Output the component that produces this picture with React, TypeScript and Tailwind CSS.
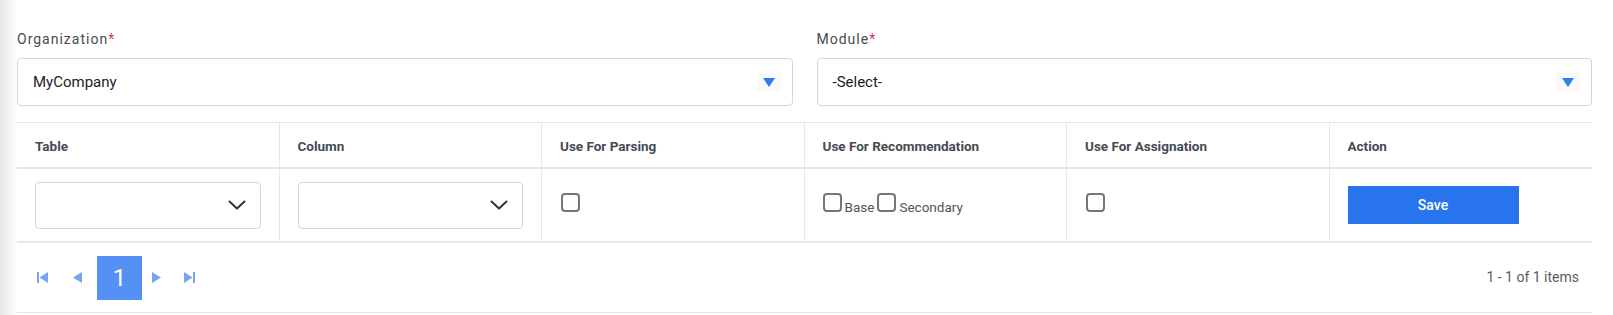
import type { ReactNode } from 'react'

const font = { fontFamily: 'Roboto, "Liberation Sans", Arial, sans-serif' }

function BlueCaret() {
  return (
    <span className="mr-[11px] flex h-[18px] w-[24px] items-center justify-center bg-[#f8f9fa]">
      <svg width="12" height="9" viewBox="0 0 12 9">
        <path d="M0 0h12L6 9z" fill="#2f7cf2" />
      </svg>
    </span>
  )
}

function Field({ label, value }: { label: string; value: string }) {
  return (
    <div>
      <div className="mb-[9px] h-[20px] text-[14px] leading-[20px] tracking-[1px] text-[#4a4a4a]">
        {label}
        <span className="text-[#e0344f]">*</span>
      </div>
      <div className="flex h-[48px] items-center justify-between rounded-[4px] border border-[#d3d6db] bg-white pl-[15px]">
        <span className="text-[15px] text-[#1d1d1d]">{value}</span>
        <BlueCaret />
      </div>
    </div>
  )
}

function Chevron() {
  return (
    <svg width="18" height="10" viewBox="0 0 18 10" fill="none">
      <path d="M1.5 1.5 9 8.5l7.5-7" stroke="#333" strokeWidth="2" strokeLinecap="round" strokeLinejoin="round" />
    </svg>
  )
}

function CellSelect() {
  return (
    <div className="flex h-[47px] w-full items-center justify-end rounded-[4px] border border-[#d3d6db] bg-white pr-[14px]">
      <Chevron />
    </div>
  )
}

function Box() {
  return <span className="inline-block h-[19px] w-[19px] rounded-[4px] border-2 border-[#767676] bg-white align-baseline" />
}

function Cell({ children, className = '' }: { children?: ReactNode; className?: string }) {
  return <div className={`flex items-center px-[18px] ${className}`}>{children}</div>
}

function Tri({ dir }: { dir: 'first' | 'prev' | 'next' | 'last' }) {
  const c = '#76a4f0'
  if (dir === 'prev' || dir === 'next') {
    return (
      <svg width="9" height="11" viewBox="0 0 9 11">
        {dir === 'prev' ? <path d="M9 0v11L0 5.5z" fill={c} /> : <path d="M0 0v11l9-5.5z" fill={c} />}
      </svg>
    )
  }
  return (
    <svg width="11" height="11" viewBox="0 0 11 11">
      {dir === 'first' ? (
        <>
          <rect x="0" y="0" width="2" height="11" fill={c} />
          <path d="M11 0v11L2.5 5.5z" fill={c} />
        </>
      ) : (
        <>
          <path d="M0 0v11l8.5-5.5z" fill={c} />
          <rect x="9" y="0" width="2" height="11" fill={c} />
        </>
      )}
    </svg>
  )
}

export default function App() {
  const headers = ['Table', 'Column', 'Use For Parsing', 'Use For Recommendation', 'Use For Assignation', 'Action']

  return (
    <div className="flex min-h-[315px] bg-white" style={font}>
      <div className="w-[17px] shrink-0 bg-gradient-to-r from-[#e6e6e6] to-white" />
      <div className="flex-1 pr-[21px]">
        <div className="grid grid-cols-2 gap-x-6 pt-[29px]">
          <Field label="Organization" value="MyCompany" />
          <Field label="Module" value="-Select-" />
        </div>

        <div className="mt-[16px]">
          {/* header */}
          <div className="grid grid-cols-6 divide-x divide-[#e4e7eb] border-t border-b-2 border-[#e4e7eb]">
            {headers.map((h) => (
              <Cell key={h} className="h-[44px] pt-[2px]">
                <span className="text-[13.5px] font-bold text-[#454b54]">{h}</span>
              </Cell>
            ))}
          </div>

          {/* row */}
          <div className="grid grid-cols-6 divide-x divide-[#e4e7eb] border-b-2 border-[#e4e7eb]">
            <Cell className="h-[72px]">
              <CellSelect />
            </Cell>
            <Cell className="h-[72px]">
              <CellSelect />
            </Cell>
            <Cell className="h-[72px] pl-[19px]">
              <div className="text-[13.5px] leading-[20px]">
                <Box />
              </div>
            </Cell>
            <Cell className="h-[72px]">
              <div className="text-[13.5px] leading-[20px] text-[#555]">
                <Box />
                <span className="ml-[3px] mr-[3px]">Base</span>
                <Box />
                <span className="ml-[3px]">Secondary</span>
              </div>
            </Cell>
            <Cell className="h-[72px] pl-[19px]">
              <div className="text-[13.5px] leading-[20px]">
                <Box />
              </div>
            </Cell>
            <Cell className="h-[72px]">
              <button className="h-[38px] w-[171px] bg-[#2874ec] text-[14px] font-medium text-white">Save</button>
            </Cell>
          </div>

          {/* pager */}
          <div className="flex h-[70px] items-center justify-between border-b border-[#e4e7eb]">
            <div className="flex items-center pl-[20px]">
              <Tri dir="first" />
              <span className="ml-[25px] flex">
                <Tri dir="prev" />
              </span>
              <span className="ml-[15px] flex h-[44px] w-[45px] items-center justify-center bg-[#5591f5] text-[24px] text-white">
                1
              </span>
              <span className="ml-[10px] flex">
                <Tri dir="next" />
              </span>
              <span className="ml-[23px] flex">
                <Tri dir="last" />
              </span>
            </div>
            <span className="pr-[13px] text-[14px] text-[#5b5b5b]">1 - 1 of 1 items</span>
          </div>
        </div>
      </div>
    </div>
  )
}
